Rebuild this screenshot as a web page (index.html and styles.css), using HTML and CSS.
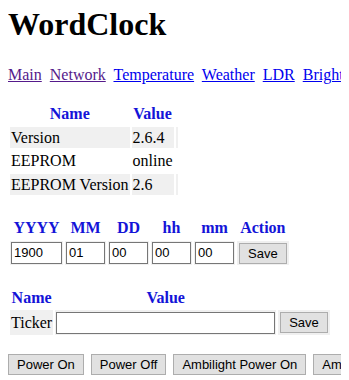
FILE: index.html
```html
<!DOCTYPE html>
<html lang="en">
<head>
    <meta charset="UTF-8">
    <meta name="viewport" content="width=device-width, initial-scale=1.0">
    <title>WordClock</title>
    <link rel="stylesheet" href="styles.css">
</head>
<body>
    <h1>WordClock</h1>
    <p class="nav">
        <a href="#" class="visited">Main</a>
        <a href="#" class="visited">Network</a>
        <a href="#">Temperature</a>
        <a href="#">Weather</a>
        <a href="#">LDR</a>
        <a href="#">Brightness</a>
    </p>

    <table class="info">
        <tr><th>Name</th><th>Value</th><th></th></tr>
        <tr><td>Version</td><td>2.6.4</td><td></td></tr>
        <tr><td>EEPROM</td><td>online</td><td></td></tr>
        <tr><td>EEPROM Version</td><td>2.6</td><td></td></tr>
    </table>

    <table class="date">
        <tr><th>YYYY</th><th>MM</th><th>DD</th><th>hh</th><th>mm</th><th>Action</th></tr>
        <tr>
            <td><input type="text" class="year" value="1900"></td>
            <td><input type="text" class="two" value="01"></td>
            <td><input type="text" class="two" value="00"></td>
            <td><input type="text" class="two" value="00"></td>
            <td><input type="text" class="two" value="00"></td>
            <td><button>Save</button></td>
        </tr>
    </table>

    <table class="ticker">
        <tr><th>Name</th><th>Value</th><th></th></tr>
        <tr>
            <td>Ticker</td>
            <td><input type="text" class="long" value=""></td>
            <td><button>Save</button></td>
        </tr>
    </table>

    <div class="buttons">
        <button>Power On</button>
        <button>Power Off</button>
        <button>Ambilight Power On</button>
        <button>Ambilight Power Off</button>
    </div>
</body>
</html>
```

FILE: styles.css
```css
html {
    overflow: hidden;
}
body {
    font-family: "Liberation Serif", "Times New Roman", serif;
    font-size: 16px;
    margin: 6px 8px 8px;
}
h1 {
    font-size: 32px;
    margin: 0 0 23px;
}
.nav {
    margin: 0;
    white-space: nowrap;
}
.nav a {
    color: #0000ee;
    margin-right: 4px;
}
.nav a.visited {
    color: #551a8b;
}
table {
    border-spacing: 2px;
    margin: 17px 0 0;
}
th, td {
    padding: 1px;
    line-height: 19.5px;
}
th {
    color: #1414d8;
}
tr:nth-child(even) td {
    background: #f0f0f0;
}
.date, .ticker {
    margin-top: 18px;
}
input {
    font-family: "Liberation Sans", Arial, sans-serif;
    font-size: 13px;
    height: 22px;
    box-sizing: border-box;
    border: 1px solid #767676;
    padding: 1px 2px;
    margin: 0;
    vertical-align: middle;
}
input.year {
    width: 51px;
}
input.two {
    width: 39px;
}
input.long {
    width: 219px;
}
button {
    font-family: "Liberation Sans", Arial, sans-serif;
    font-size: 13px;
    background: #e1e1e1;
    border: 1px solid #adadad;
    padding: 1px 8px;
    height: 21px;
    margin: 0;
    color: #000;
}
td button {
    margin: 0 1px;
    vertical-align: middle;
}
.buttons {
    display: flex;
    gap: 7px;
    margin-top: 17px;
    white-space: nowrap;
}
.buttons button {
    flex: none;
}
```
